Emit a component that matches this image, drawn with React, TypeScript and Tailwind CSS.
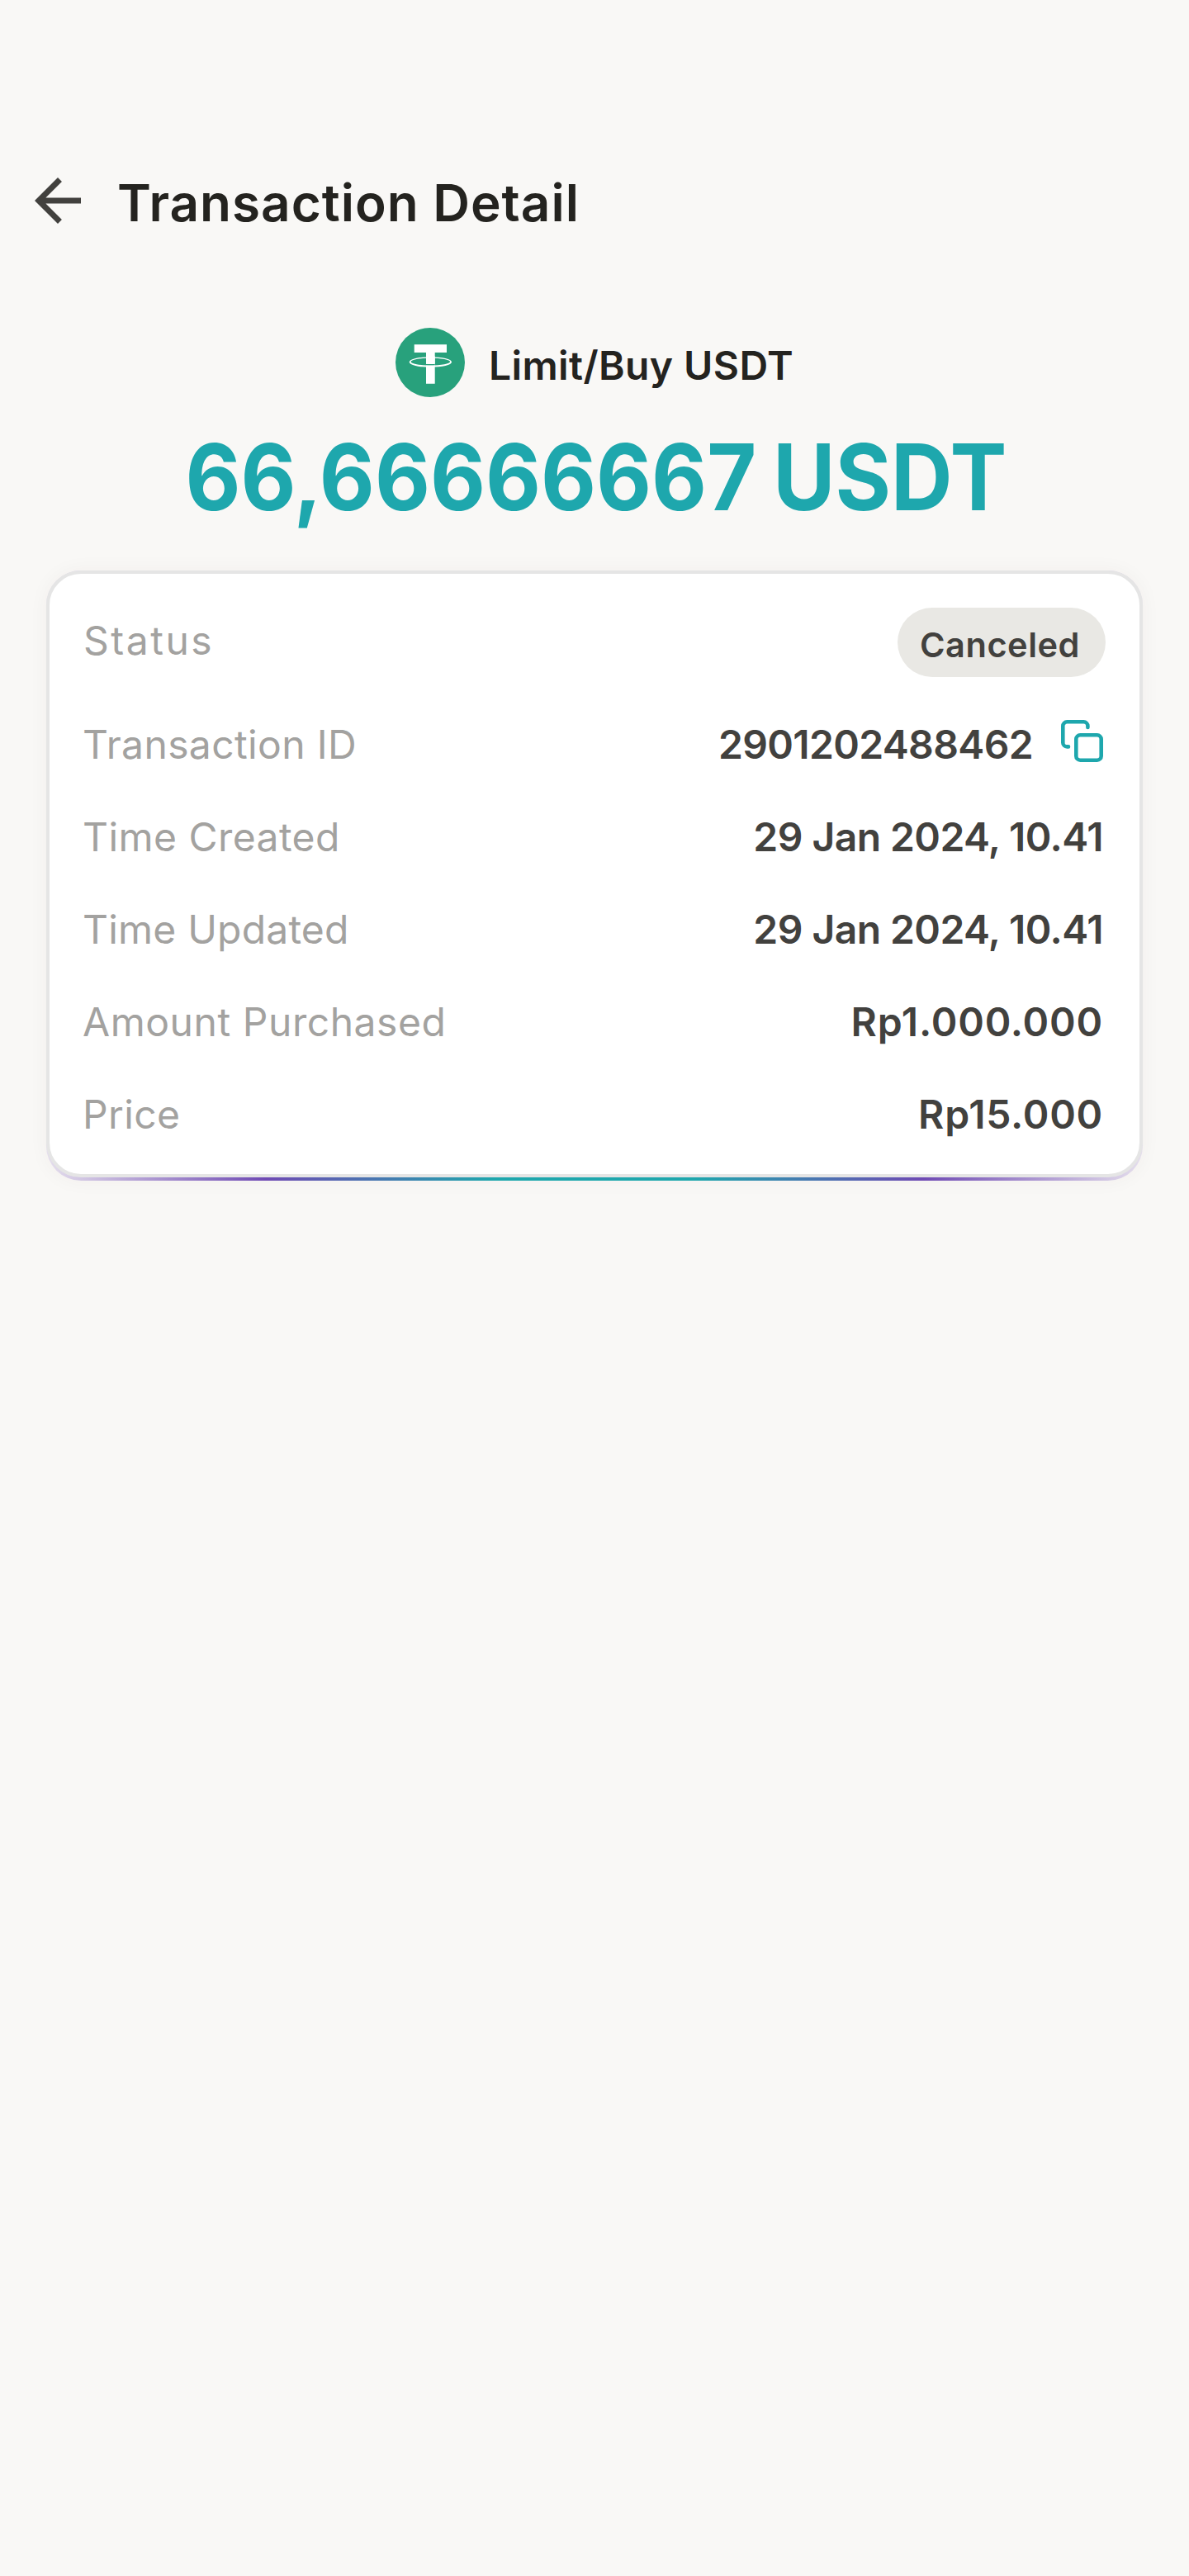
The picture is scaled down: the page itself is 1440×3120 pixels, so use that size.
import type { ReactNode } from "react";

function BackArrow() {
  return (
    <svg viewBox="0 0 24 24" className="size-[84px] shrink-0 fill-[#42413e]">
      <path d="M20 11H7.83l5.59-5.59L12 4l-8 8 8 8 1.41-1.41L7.83 13H20z" />
    </svg>
  );
}

function TetherLogo() {
  return (
    <svg viewBox="0 0 84 84" className="size-[84px] shrink-0">
      <circle cx="42" cy="42" r="42" fill="#28a17c" />
      <path d="M22.7 20.3H62v9.6H47.7v37.8H37V29.9H22.7z" fill="#fff" />
      <path d="M37 43.8q5.3.5 10.7 0v1.7q-5.4.5-10.7 0z" fill="#28a17c" />
      <path
        fillRule="evenodd"
        d="M16.7 41.5a25.65 6.3 0 0 1 51.3 0a25.65 6.3 0 0 1-51.3 0zM18.6 41.1a23.75 4.5 0 0 0 47.5 0a23.75 4.5 0 0 0-47.5 0z"
        fill="#fff"
      />
      <path d="M37 34.5h10.7v9.2q-5.4.5-10.7 0z" fill="#fff" />
    </svg>
  );
}

function CopyIcon() {
  return (
    <svg
      viewBox="0 0 51 51"
      className="size-[51px] shrink-0"
      fill="none"
      stroke="#1ea7ad"
      strokeWidth="4.6"
      strokeLinecap="round"
    >
      <rect x="18.3" y="18.3" width="30.4" height="30.4" rx="5" />
      <path d="M32.4 9V7.3a5 5 0 0 0-5-5H7.3a5 5 0 0 0-5 5v20.1a5 5 0 0 0 5 5H9" />
    </svg>
  );
}

function Row({ label, labelClass, children }: { label: string; labelClass: string; children: ReactNode }) {
  return (
    <div className="flex h-14 items-center justify-between">
      <span className={`font-normal text-[#a3a2a0] ${labelClass}`}>{label}</span>
      {children}
    </div>
  );
}

export default function App() {
  return (
    <main className="flex h-[3120px] w-[1440px] flex-col bg-[#f9f8f6] pt-[201px] font-['Inter',sans-serif] whitespace-nowrap">
      <header className="flex h-[84px] items-center gap-[30px] pl-7">
        <BackArrow />
        <h1 className="pt-[5px] text-[62px] leading-[76px] font-semibold tracking-[1px] text-[#24231f]">
          Transaction Detail
        </h1>
      </header>

      <div className="mt-28 flex h-[84px] items-center justify-center gap-[29px]">
        <TetherLogo />
        <span className="pt-[7px] text-[48px] leading-[60px] font-semibold tracking-[0.41px] text-[#24231f]">
          Limit/Buy USDT
        </span>
      </div>

      <p className="mt-[27px] scale-x-[0.93] pl-1 text-center text-[111px] leading-[140px] font-bold text-[#1ea7ad] [word-spacing:-5px]">
        66,66666667 USDT
      </p>

      <section className="mx-14 mt-[43px] rounded-[42px] bg-[linear-gradient(90deg,#6f4ab426_0%,#6f4ab4_20%,#1ea7ad_41%,#1ea7ad_59%,#6f4ab4_80%,#6f4ab426_100%)] pb-[3.5px] shadow-[0_0_24px_rgba(60,50,40,0.045)]">
        <div className="rounded-[42px] border-4 border-[#e5e5e5] bg-white pt-[41px] pr-[41px] pb-[44px] pl-[40px] text-[48px] leading-[56px]">
          <div className="flex h-[84px] items-center justify-between">
            <span className="pb-[5px] pl-px font-normal tracking-[2.5px] text-[#a3a2a0]">Status</span>
            <span className="flex h-[84px] w-[252px] items-center rounded-full bg-[#e9e8e4] pt-[5px] pl-[27px] text-[41.5px] font-semibold tracking-[0.53px] text-[#42413e]">
              Canceled
            </span>
          </div>
          <div className="mt-[54px] flex flex-col gap-14 pr-[3px] font-semibold text-[#42413e]">
            <Row label="Transaction ID" labelClass="tracking-[0.37px]">
              <div className="flex items-center gap-[34px]">
                <span className="tracking-[-0.63px]">2901202488462</span>
                <div className="pb-[9px]">
                  <CopyIcon />
                </div>
              </div>
            </Row>
            <Row label="Time Created" labelClass="tracking-[0.45px]">
              <span className="tracking-[-0.56px]">29 Jan 2024, 10.41</span>
            </Row>
            <Row label="Time Updated" labelClass="tracking-[0.2px]">
              <span className="tracking-[-0.56px]">29 Jan 2024, 10.41</span>
            </Row>
            <Row label="Amount Purchased" labelClass="tracking-[0.55px]">
              <span className="tracking-[0.81px]">Rp1.000.000</span>
            </Row>
            <Row label="Price" labelClass="tracking-[0.37px]">
              <span className="tracking-[0.75px]">Rp15.000</span>
            </Row>
          </div>
        </div>
      </section>
    </main>
  );
}
